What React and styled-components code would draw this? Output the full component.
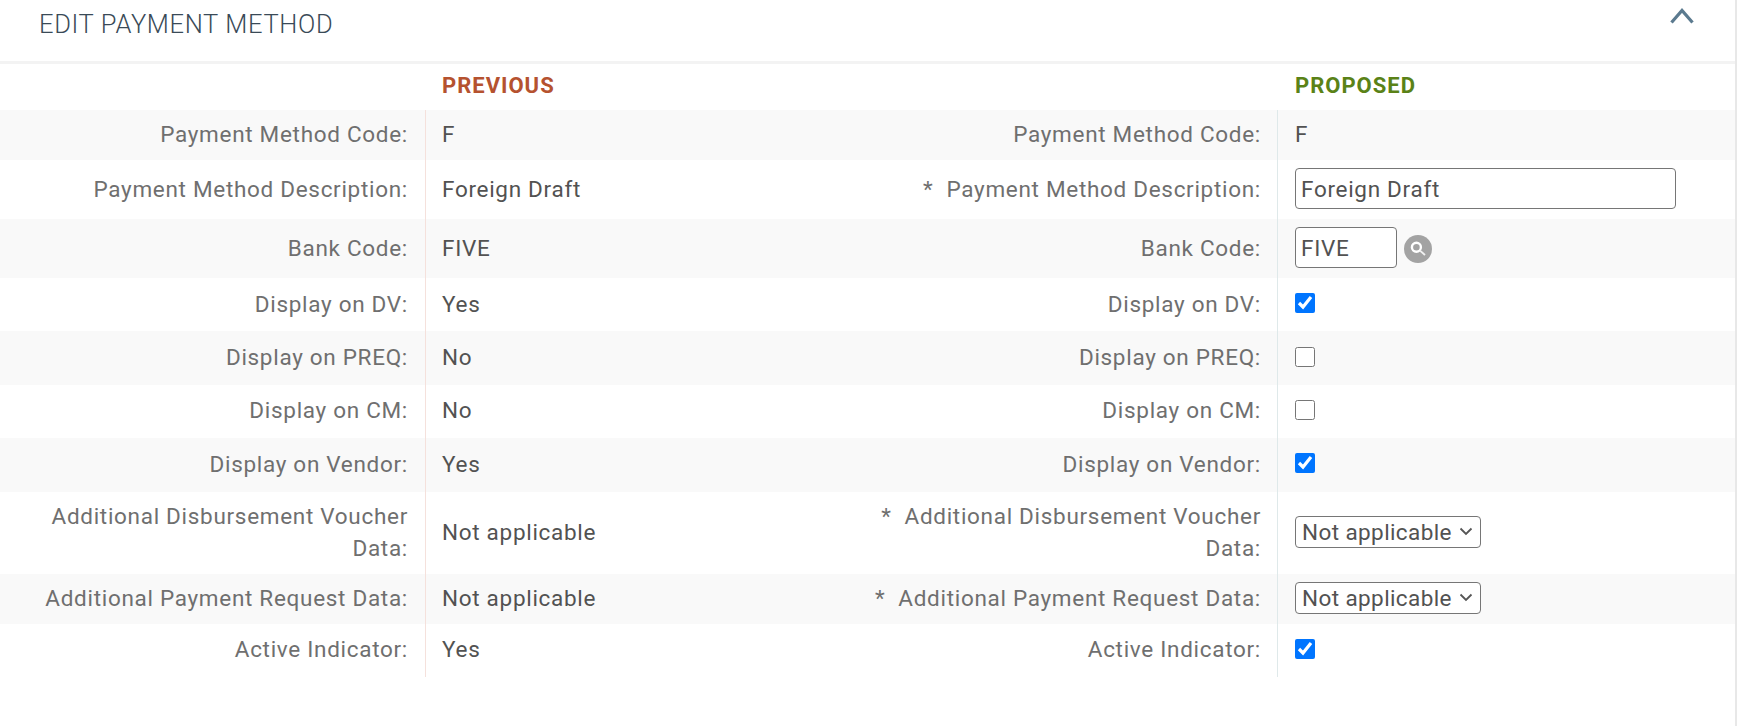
import React from "react";
import styled, { createGlobalStyle } from "styled-components";

const GlobalStyle = createGlobalStyle`
  html, body {
    margin: 0;
    padding: 0;
    background: #fff;
    font-family: Roboto, "Liberation Sans", sans-serif;
  }
`;

const rows = [
  { label: "Payment Method Code:", value: "F", kind: "text" },
  { label: "Payment Method Description:", value: "Foreign Draft", kind: "input", required: true },
  { label: "Bank Code:", value: "FIVE", kind: "lookup" },
  { label: "Display on DV:", value: "Yes", kind: "check" },
  { label: "Display on PREQ:", value: "No", kind: "check" },
  { label: "Display on CM:", value: "No", kind: "check" },
  { label: "Display on Vendor:", value: "Yes", kind: "check" },
  { label: "Additional Disbursement Voucher Data:", value: "Not applicable", kind: "select", required: true },
  { label: "Additional Payment Request Data:", value: "Not applicable", kind: "select", required: true },
  { label: "Active Indicator:", value: "Yes", kind: "check" },
];

const Proposed = ({ row }) => {
  if (row.kind === "input") return <TextInput defaultValue={row.value} />;
  if (row.kind === "lookup")
    return (
      <>
        <CodeInput defaultValue={row.value} />
        <SearchButton>
          <svg width="16" height="15" viewBox="0 0 16 15">
            <circle cx="6.4" cy="6.2" r="4.5" fill="none" stroke="#fff" strokeWidth="2.4" />
            <path d="M10 9.6 L15 14" stroke="#f1f1f1" strokeWidth="1.9" />
          </svg>
        </SearchButton>
      </>
    );
  if (row.kind === "check") return <CheckBox type="checkbox" defaultChecked={row.value === "Yes"} />;
  if (row.kind === "select")
    return (
      <Select defaultValue={row.value}>
        <option>{row.value}</option>
      </Select>
    );
  return row.value;
};

export default function App() {
  return (
    <Panel>
      <GlobalStyle />
      <Header>
        <Title>EDIT PAYMENT METHOD</Title>
        <Collapse viewBox="0 0 24 16">
          <path d="M1.5 14.5 L12 2.5 L22.5 14.5" />
        </Collapse>
      </Header>
      <HeadRow>
        <span />
        <Previous>PREVIOUS</Previous>
        <span />
        <ProposedHead>PROPOSED</ProposedHead>
      </HeadRow>
      {rows.map((row) => (
        <Row key={row.label}>
          <Label>{row.label}</Label>
          <Value $line="#f5e1dc">{row.value}</Value>
          <ProposedLabel>
            {row.required && <Star>*</Star>}
            {row.label}
          </ProposedLabel>
          <ProposedValue $line="#dfe9ea" $tall={row.kind === "check"}>
            <Proposed row={row} />
          </ProposedValue>
        </Row>
      ))}
    </Panel>
  );
}

const Panel = styled.div`
  width: 1737px;
  min-height: 726px;
  box-sizing: border-box;
  border-right: 2px solid #e8e8e8;
  background: #fff;
`;

const Header = styled.div`
  height: 61px;
  border-bottom: 3px solid #f3f3f3;
  display: flex;
  justify-content: space-between;
  align-items: flex-start;
  padding: 0 41px 0 39px;
`;

const Title = styled.h2`
  margin: 9px 0 0;
  font-size: 25.5px;
  line-height: 30px;
  font-weight: 300;
  letter-spacing: 0.65px;
  color: #3a4a57;
`;

const Collapse = styled.svg`
  width: 24px;
  height: 16px;
  margin-top: 8px;
  fill: none;
  stroke: #5b7a8f;
  stroke-width: 3.2;
`;

const columns = "425px 426px 426px 458px";

const HeadRow = styled.div`
  display: grid;
  grid-template-columns: ${columns};
  height: 46px;
  align-items: center;
  font-size: 22px;
  font-weight: 700;
  letter-spacing: 1px;
  padding-bottom: 4px;
  box-sizing: border-box;
`;

const Previous = styled.div`
  padding-left: 17px;
  color: #b5522f;
`;

const ProposedHead = styled.div`
  padding-left: 18px;
  color: #5a8217;
`;

const Row = styled.div`
  display: grid;
  grid-template-columns: ${columns};
  font-size: 22.5px;
  line-height: 32px;
  letter-spacing: 0.7px;

  &:nth-child(odd) {
    background: #f9f9f9;
  }
`;

const Label = styled.div`
  box-sizing: border-box;
  align-self: center;
  padding: 8px 17px 10px;
  text-align: right;
  color: #6f6f6f;
`;

const ProposedLabel = styled(Label)`
  padding-right: 16px;
`;

const Star = styled.span`
  margin-right: 13px;
`;

const Value = styled.div`
  box-sizing: border-box;
  padding: 8px 16px 10px;
  display: flex;
  align-items: center;
  color: #525252;
  border-left: 1px solid ${(p) => p.$line};
  min-height: ${(p) => (p.$tall ? "53.4px" : "auto")};
`;

const ProposedValue = styled(Value)`
  padding-left: 17px;
`;

const TextInput = styled.input`
  box-sizing: border-box;
  width: 381px;
  height: 41px;
  padding: 0 5px;
  margin: 0;
  border: 1px solid #767676;
  border-radius: 4px;
  font: inherit;
  letter-spacing: inherit;
  color: #525252;
  background: #fff;
`;

const CodeInput = styled(TextInput)`
  width: 102px;
`;

const SearchButton = styled.span`
  width: 28px;
  height: 28px;
  margin: 2px 0 0 7px;
  border-radius: 50%;
  background: #a3a3a3;
  display: flex;
  align-items: center;
  justify-content: center;
`;

const CheckBox = styled.input`
  width: 20px;
  height: 20px;
  margin: 0 0 1px;
`;

const Select = styled.select`
  box-sizing: border-box;
  width: 186px;
  height: 32px;
  padding: 0 0 0 6px;
  margin: 0;
  appearance: none;
  font: inherit;
  line-height: normal;
  letter-spacing: 0.4px;
  color: #525252;
  background: #fff url("data:image/svg+xml,%3Csvg xmlns='http://www.w3.org/2000/svg' width='14' height='9'%3E%3Cpath d='M1.5 1.5 L7 7 L12.5 1.5' fill='none' stroke='%23555' stroke-width='1.8'/%3E%3C/svg%3E") no-repeat right 7px center;
  border: 1px solid #767676;
  border-radius: 4px;
`;
